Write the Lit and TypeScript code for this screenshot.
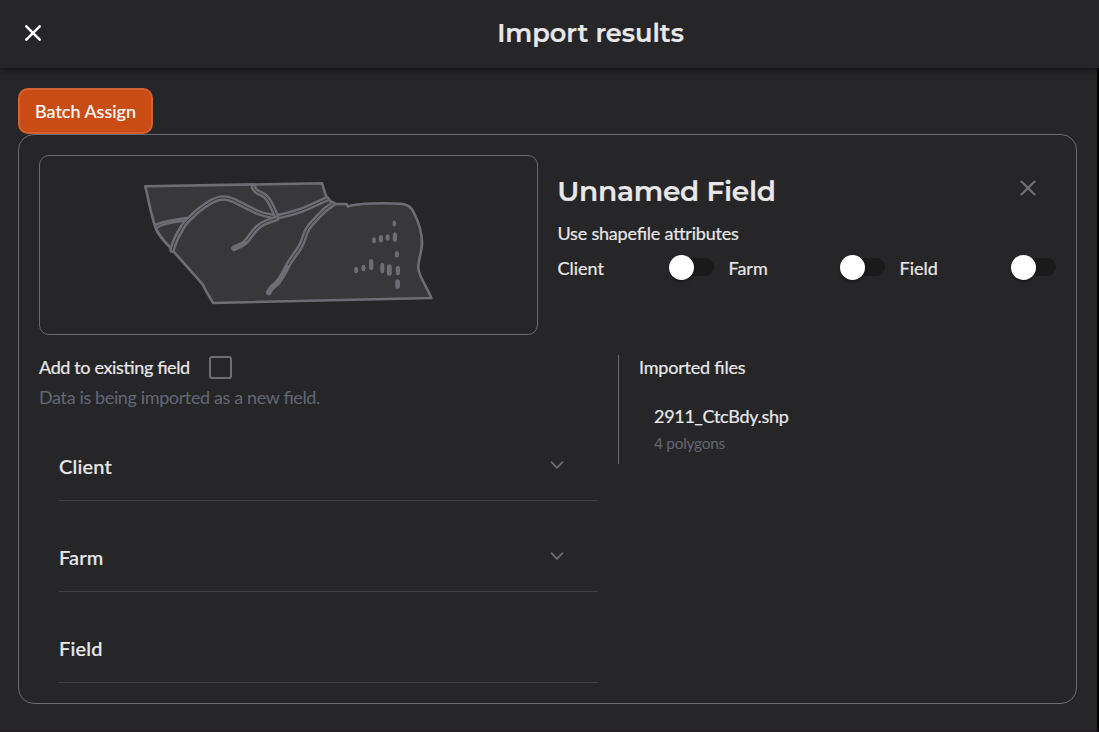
import { LitElement, html, css, svg } from "lit";
import { customElement, property } from "lit/decorators.js";

@customElement("toggle-field")
class ToggleField extends LitElement {
  @property() label = "";
  static styles = css`
    :host { display: flex; align-items: center; justify-content: space-between; height: 26px; }
    .label { position: relative; top: 1px; margin-left: -0.5px; }
    .track { width: 45px; height: 18px; border-radius: 9px; background: #1a1a1a; display: flex; align-items: center; }
    .thumb { width: 25px; height: 25px; flex: none; border-radius: 50%; background: #fff; box-shadow: 0 2px 3px rgba(0, 0, 0, 0.35); }
  `;
  render() {
    return html`<span class="label">${this.label}</span>
      <span class="track"><span class="thumb"></span></span>`;
  }
}

@customElement("form-row")
class FormRow extends LitElement {
  @property() label = "";
  @property({ type: Boolean }) select = false;
  static styles = css`
    :host { display: flex; align-items: center; justify-content: space-between; box-sizing: border-box; height: 66px; border-bottom: 1px solid #404043; padding-right: 34px; font-size: 20px; font-weight: 500; letter-spacing: 0.2px; }
    .label { margin-top: -4px; }
    svg { display: block; margin-top: -5px; }
  `;
  render() {
    return html`<span class="label">${this.label}</span>${this.select
        ? html`<svg width="14" height="8" viewBox="0 0 14 8" fill="none" stroke="#6e6d75" stroke-width="1.8" stroke-linecap="round" stroke-linejoin="round"><path d="M1.5 1.2 7 6.8l5.5-5.6" /></svg>`
        : ""}`;
  }
}

const channels = [
  "M172 250C174 244 176 238 180 231.700C183 226 185 222 190 218.300C196 212 202 207 210 202.300C216 199 219 198 223.300 198C227 198 230 199 233.300 200.300L256.700 212C264 215 271 216 276.700 217C281 216 292 213.500 300 210.700C310 207 318 203 327 199",
  "M253.500 186.500C255 194 262 192 266 197C271 202 273 209 276 215.700",
  "M276.700 218.300C269 221 262 223 258 227C252 232 250 238 245 242.500C241 246 238 246 234 248.300",
  "M333 204C328 207 323 211 318.300 216.500C313 222 309 226 306.500 231C304 237 303 242 300 247C296 254 291 259 287 267C283 275 281 279 276.700 283.500C272 287 270 289 268.700 292.500",
];

const marks = [
  [394.300, 223.600, 3.600, 6], [374, 240.300, 3.800, 6], [380.900, 238.700, 4.200, 7.500], [387.600, 237.600, 4, 6.500],
  [394.900, 237, 4.200, 9.500], [396.900, 254.200, 4, 6.500], [356.100, 270.100, 4, 6.500], [363.500, 268, 4, 6.500],
  [371.200, 264.400, 4.200, 11], [382.300, 267.900, 4, 10.500], [389.300, 269.900, 4.800, 11.500], [397.900, 270.500, 4.200, 9.500], [397.600, 283.900, 4.600, 9.500],
];

@customElement("app-root")
class AppRoot extends LitElement {
  static styles = css`
    :host { display: block; height: 732px; box-sizing: border-box; overflow: hidden; background: #262628; color: #e8e8ea; font: 18px/24px Lato, sans-serif; font-feature-settings: "liga" 1; -webkit-text-stroke: 0.2px currentColor; border-bottom: 1px solid #221a20; }
    header { height: 68px; display: grid; grid-template-columns: 82px 1fr; align-items: center; box-shadow: 0 2px 8px rgba(0, 0, 0, 0.5); position: relative; }
    header svg { display: block; margin: -2px 0 0 25px; }
    h1, h2 { margin: 0; font-family: Montserrat, Inter, sans-serif; font-weight: 600; }
    h1 { font-size: 25.600px; line-height: 34px; text-align: center; margin-top: -2px; }
    h2 { font-size: 28px; line-height: 38px; letter-spacing: -0.28px; white-space: nowrap; margin-left: -0.7px; }
    main { height: 663px; box-sizing: border-box; padding: 20px 20px 0 18px; border-right: 2px solid #000; }
    .batch { display: block; height: 46px; width: 135px; padding: 0; box-sizing: border-box; border: 2px solid #d2622f; border-radius: 10px; background: #c94c14; color: #fff; font: 18px/24px Lato, sans-serif; }
    .card { height: 570px; box-sizing: border-box; border: 1px solid #6b6a71; border-radius: 16px; padding: 20px; }
    .top { display: grid; grid-template-columns: 499px 498px; column-gap: 20px; height: 180px; }
    .preview { border: 1px solid #6b6a71; border-radius: 10px; overflow: hidden; }
    .preview svg { display: block; }
    .info { padding-top: 17px; }
    .heading { display: flex; justify-content: space-between; }
    .heading svg { margin: 8px 20px 0 0; }
    .sub { margin-top: 11px; margin-left: -0.5px; height: 24px; letter-spacing: -0.2px; }
    .toggles { display: grid; grid-template-columns: repeat(3, 156px); column-gap: 15px; margin-top: 9px; }
    .bottom { display: grid; grid-template-columns: 559px 1fr; column-gap: 20px; padding-top: 20px; align-items: start; }
    .existing { display: flex; align-items: center; height: 25px; gap: 19px; letter-spacing: -0.360px; }
    .existing span:first-child { margin-top: -2px; }
    .check { width: 23px; height: 23px; box-sizing: border-box; border: 2px solid #6e6d75; border-radius: 3px; }
    .muted { color: #626775; -webkit-text-stroke: 0; }
    .note { margin-top: 5px; margin-bottom: 1px; letter-spacing: -0.370px; }
    .form { padding: 25px 0 0 20px; display: grid; row-gap: 25px; }
    .files { border-left: 1px solid #6b6a71; padding-left: 20px; height: 109px; box-sizing: border-box; letter-spacing: -0.2px; }
    .file { padding: 25px 0 0 15px; letter-spacing: -0.300px; }
    .size { font-size: 15.500px; margin-top: 3px; }
  `;
  render() {
    return html`
      <header>
        <svg width="16" height="16" viewBox="0 0 16 16" stroke="#fff" stroke-width="2.500" stroke-linecap="round"><path d="M1.300 1.300 14.700 14.700M14.700 1.300 1.300 14.700" /></svg>
        <h1>Import results</h1>
      </header>
      <main>
        <button class="batch">Batch Assign</button>
        <section class="card">
          <div class="top">
            <div class="preview">
              <svg width="497" height="178" viewBox="40 156 497 178" fill="none" stroke-linejoin="round" stroke-linecap="round">
                <path fill="#38383a" stroke="#6e6d75" stroke-width="2.600" d="M145.300 186.300 322 183.300 326.700 198 334 204H346.700L348 206.600C352 204.500 358 204.500 365 203.700C380 203 390 203 403 204C409 205 412 208 414 213C418 221 422 230 422 243C422 252 418 260 418.300 268C418.500 276 427 287 431.300 298L213.300 303C209 296 206 292 202.700 284.300L174 252 170.700 248.200C165 242 158 235 156 229C151 215 149 202 145.300 186.300Z" />
                <path fill="#38383a" stroke="#6e6d75" stroke-width="2.300" d="M156 228C166 222 176 222 185.500 220.700C179 228 174 236 171 248C165 242 159 236 156 228ZM155 225C165 220 175 220 186 218" />
                ${channels.map((d) => svg`<path d=${d} stroke="#6e6d75" stroke-width="5.600" /><path d=${d} stroke="#303033" stroke-width="0.900" />`)}
                <path d="M234 248.300C238 246 241 246 245 242.500M287 267C283 275 281 279 276.700 283.500C272 287 270 289 268.700 292.500" stroke="#6e6d75" stroke-width="4" />
                ${marks.map(([x, y, w, h]) => svg`<rect x=${x - w / 2} y=${y - h / 2} width=${w} height=${h} rx="2" ry="2.500" fill="#6e6d75" />`)}
              </svg>
            </div>
            <div class="info">
              <div class="heading">
                <h2>Unnamed Field</h2>
                <svg width="16" height="16" viewBox="0 0 16 16" stroke="#6e6d75" stroke-width="2.300" stroke-linecap="round"><path d="M1.500 1.500 14.500 14.500M14.500 1.500 1.500 14.500" /></svg>
              </div>
              <div class="sub">Use shapefile attributes</div>
              <div class="toggles">
                <toggle-field label="Client"></toggle-field>
                <toggle-field label="Farm"></toggle-field>
                <toggle-field label="Field"></toggle-field>
              </div>
            </div>
          </div>
          <div class="bottom">
            <div>
              <div class="existing"><span>Add to existing field</span><span class="check"></span></div>
              <div class="note muted">Data is being imported as a new field.</div>
              <div class="form">
                <form-row label="Client" select></form-row>
                <form-row label="Farm" select></form-row>
                <form-row label="Field"></form-row>
              </div>
            </div>
            <div class="files">
              <div>Imported files</div>
              <div class="file">
                <div>2911_CtcBdy.shp</div>
                <div class="size muted">4 polygons</div>
              </div>
            </div>
          </div>
        </section>
      </main>
    `;
  }
}
